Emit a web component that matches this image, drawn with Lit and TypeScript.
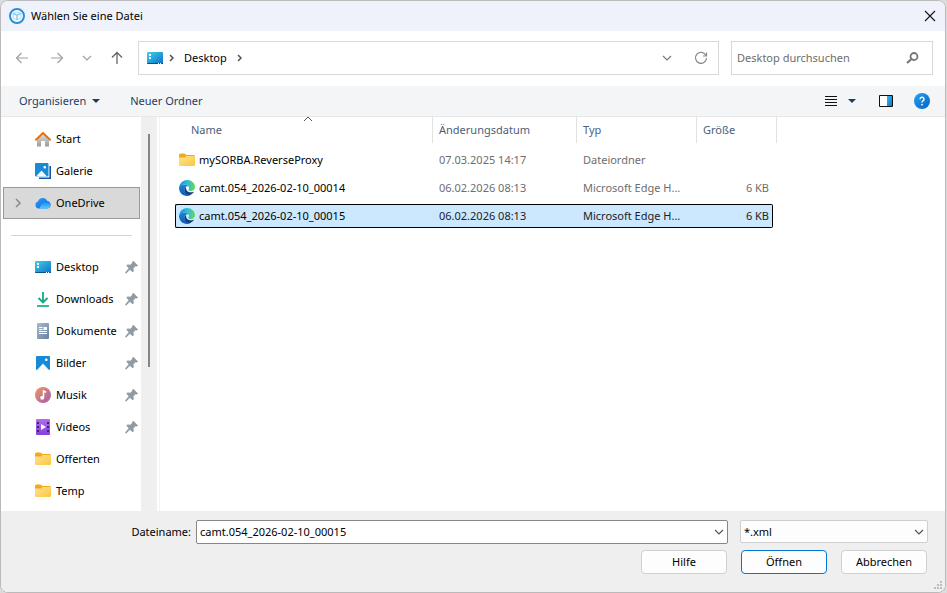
import { LitElement, html, css, svg, nothing } from "lit";
import { customElement, property, state } from "lit/decorators.js";
import { classMap } from "lit/directives/class-map.js";

const icons: Record<string, unknown> = {
  app: svg`<circle cx="8" cy="8" r="7" fill="#fff" stroke="#2b8ed6" stroke-width="2"/><path d="M4 5.300 8 4l4 1.300v4.700L8 12l-4-2z" fill="#f2faff" stroke="#a8d6f3"/><path d="M4 5.500 8 7l4-1.500M8 7v5" fill="none" stroke="#7cc0ea" stroke-width="1.200"/>`,
  close: svg`<path d="M3 3l10 10M13 3 3 13" fill="none" stroke="#1a1a1a" stroke-width="1.200"/>`,
  back: svg`<path d="M14 8H2.500M7.500 3l-5 5 5 5" fill="none" stroke="#a0a0a0" stroke-width="1.200"/>`,
  forward: svg`<path d="M2 8h11.500M8.500 3l5 5-5 5" fill="none" stroke="#a0a0a0" stroke-width="1.200"/>`,
  up: svg`<path d="M8 14V2.500M3 7.500l5-5 5 5" fill="none" stroke="#666" stroke-width="1.300"/>`,
  down: svg`<path d="M4 6l4 4 4-4" fill="none" stroke="currentColor" stroke-width="1.200"/>`,
  crumb: svg`<path d="M7 5l3 3-3 3" fill="none" stroke="#555" stroke-width="1.500"/>`,
  expand: svg`<path d="M6 4l4 4-4 4" fill="none" stroke="#8a8a8a" stroke-width="1.500"/>`,
  refresh: svg`<path d="M13 5.500A5.500 5.500 0 1 0 13.500 8M13.500 2.500v3.500H10" fill="none" stroke="#8a8a8a" stroke-width="1.200"/>`,
  search: svg`<circle cx="10" cy="6.500" r="3.500" fill="none" stroke="#777" stroke-width="1.800"/><path d="M7.500 9 3 13" stroke="#777" stroke-width="2.200"/>`,
  caret: svg`<path d="M4 6h8l-4 4z" fill="#1c3d64"/>`,
  lines: svg`<path d="M2 3.500h12M2 6.500h12M2 9.500h12M2 12.500h12" stroke="#111" stroke-width="1"/>`,
  pane: svg`<path d="M1.500 2.500h13v11h-13z" fill="#fff" stroke="#111"/><path d="M9 3h5v10H9z" fill="url(#g-pane)"/><defs><linearGradient id="g-pane" x2="1" y2="1"><stop stop-color="#35b4f2"/><stop offset="1" stop-color="#0b78d0"/></linearGradient></defs>`,
  help: svg`<defs><linearGradient id="g-help" x2="1" y2="1"><stop stop-color="#25a3ee"/><stop offset="1" stop-color="#0662c4"/></linearGradient></defs><circle cx="8" cy="8" r="8" fill="url(#g-help)"/><path d="M6 6.200a2 2 0 1 1 3 1.700c-.7.500-1 .8-1 1.700" fill="none" stroke="#fff" stroke-width="1.400"/><circle cx="8" cy="11.600" r=".9" fill="#fff"/>`,
  home: svg`<defs><linearGradient id="g-home" x2="0" y2="1"><stop stop-color="#e2e2e2"/><stop offset="1" stop-color="#9b9b9b"/></linearGradient></defs><path d="M2 7.500 8 2.500l6 5V15.500h-4V10H6v5.500H2z" fill="url(#g-home)"/><path d="M1 8.800 8 2l7 6.800" fill="none" stroke="#e8710f" stroke-width="2" stroke-linecap="round" stroke-linejoin="round"/>`,
  gallery: svg`<path d="M4 15.200h11.200V3" fill="none" stroke="#0c59a8" stroke-width="1.600"/><rect width="13.500" height="13.500" rx="1" fill="#188ad8"/><path d="M1 13.500 6.500 7.500 12 13.500z" fill="#f1faff"/><rect x="8.500" y="3" width="2.500" height="2.500" rx="1" fill="#fff"/>`,
  cloud: svg`<defs><linearGradient id="g-cloud" x2="1" y2="1"><stop stop-color="#2a9df8"/><stop offset="1" stop-color="#1264e0"/></linearGradient><linearGradient id="g-cloud2" x2="0" y2="1"><stop stop-color="#1d7cec"/><stop offset="1" stop-color="#4fd0ff"/></linearGradient></defs><path d="M3.500 13.500A3.600 3.600 0 0 1 3 6.500a5 5 0 0 1 9.300-.5 3.800 3.800 0 0 1 .2 7.500z" fill="url(#g-cloud)"/><path d="M4.500 13.500c1.500-4.500 4-7 8-7.200a3.700 3.700 0 0 1 0 7.200z" fill="url(#g-cloud2)"/>`,
  desktop: svg`<defs><linearGradient id="g-desk" x2="1" y2="1"><stop stop-color="#3bd3ea"/><stop offset="1" stop-color="#1070c8"/></linearGradient></defs><rect y="2" width="16" height="12" rx="1" fill="url(#g-desk)"/><path d="M0 13h16v.500l-.5.500H.5z" fill="#0e4f86"/><path d="M2 4h2v2H2zM2 7h2v2H2z" fill="#fff"/><path d="M11 13h1v1h-1zM13 13h1v1h-1z" fill="#fff"/>`,
  download: svg`<path d="M8 1v10M3.500 7 8 11.500 12.500 7" fill="none" stroke="#18a884" stroke-width="1.800"/><path d="M2 15h12" stroke="#20b488" stroke-width="1.800"/>`,
  document: svg`<defs><linearGradient id="g-doc" x2="1" y2="1"><stop stop-color="#a9bdd2"/><stop offset="1" stop-color="#66819f"/></linearGradient></defs><rect x="2" y="0" width="12" height="16" rx="1" fill="url(#g-doc)"/><path d="M4 4.500h3.500M4 6.500h3.500M4 8.500h8M4 10.500h8" stroke="#fff"/><path d="M8.500 4h3.500v3H8.500z" fill="#fff"/>`,
  picture: svg`<rect x="1" y="1" width="14" height="14" rx="1" fill="#168ad9"/><path d="M2 15 8 8.500l6 6.500z" fill="#f2faff"/><rect x="10" y="3.500" width="2.500" height="2.500" rx="1" fill="#fff"/>`,
  music: svg`<defs><linearGradient id="g-mus" x2="1" y2="1"><stop stop-color="#f09a5c"/><stop offset="1" stop-color="#a15bb0"/></linearGradient></defs><circle cx="8" cy="8" r="8" fill="url(#g-mus)"/><path d="M8.500 10.500V4l2.500 1.200" fill="none" stroke="#fff" stroke-width="1.500"/><circle cx="7.200" cy="10.700" r="2" fill="#fff"/>`,
  video: svg`<defs><linearGradient id="g-vid" x2="0" y2="1"><stop stop-color="#b06cf2"/><stop offset="1" stop-color="#8240dc"/></linearGradient></defs><rect x="1" width="14" height="16" rx="1" fill="url(#g-vid)"/><path d="M2 3h2v2H2zM2 7h2v2H2zM2 11h2v2H2zM12 3h2v2h-2zM12 7h2v2h-2zM12 11h2v2h-2z" fill="#46206f"/><path d="M6 5l5 3-5 3z" fill="#fff"/>`,
  folder: svg`<defs><linearGradient id="g-fold" x2="1" y2="1"><stop stop-color="#ffe391"/><stop offset="1" stop-color="#fcc63f"/></linearGradient></defs><path d="M0 3q0-1.500 1.500-1.500h4L7.500 3H14.500Q16 3 16 4.500V8H0z" fill="#efab18"/><path d="M0 5.500h6L7.500 4H15q1 0 1 1v8q0 1-1 1H1q-1 0-1-1z" fill="url(#g-fold)"/>`,
  edge: svg`<defs><linearGradient id="g-e1" x1="0" y1=".4" x2="1" y2=".5"><stop stop-color="#1a8fd8"/><stop offset=".5" stop-color="#2fbcd6"/><stop offset="1" stop-color="#62da52"/></linearGradient><linearGradient id="g-e2" x2="0" y2="1"><stop stop-color="#1a84d8"/><stop offset="1" stop-color="#0f5cb2"/></linearGradient></defs><path d="M.2 7C.9 3 4.200 0 8 0c4.800 0 8 3.600 8 7 0 2.600-1.900 4-4 4-1.800 0-2.700-.6-2.500-1.300.2-.6.6-.9.4-2.100C9.600 5.800 7.800 4.500 5.300 4.500 3 4.500 1.200 5.500.2 7z" fill="url(#g-e1)"/><path d="M0 8c.2-2.300 2.600-3.700 5.300-3.500 1.700.1 3.200.8 4 1.800C7.200 6 5.500 7.700 5.500 9.800c0 3 2.200 5 5.500 5.400-1 .5-2 .8-3 .8-4.400 0-8-3.600-8-8z" fill="url(#g-e2)"/><path d="M7 7c-1.100.8-1.600 1.800-1.600 3 0 3 2.500 5.200 5.500 5.300 1.600-.7 3-1.800 4-3.200.2-.3 0-.5-.3-.4-3.800 1.500-8-.2-7.600-4.700z" fill="#113f80"/>`,
  pin: svg`<path d="M10.500 2 15 6.500l-1.200 1L12.500 7.200l-2 2 .4 2.800-1.400 1.200-2.500-2.400L3.200 14.500l-1.200-.3.500-1.200 3.200-3.700L3.300 6.800l1.200-1.300 2.800.3 2-2-.2-1z" fill="#8f9ba5"/>`,
  sort: svg`<path d="M4 10l4-4 4 4" fill="none" stroke="#555"/>`,
  grip: svg`<path d="M11 5h2v2h-2zM8 8h2v2H8zM11 8h2v2h-2zM5 11h2v2H5zM8 11h2v2H8zM11 11h2v2h-2z" fill="#bcbcbc"/>`,
};

const icon = (name: string) =>
  html`<svg class="icon" width="16" height="16" viewBox="0 0 16 16" aria-hidden="true">${icons[name]}</svg>`;

const base = css`
  * {
    box-sizing: border-box;
  }
  .icon {
    display: block;
    flex: none;
  }
  button,
  input,
  select {
    font: inherit;
    color: inherit;
    margin: 0;
    padding: 0;
    border: 0;
    background: none;
    outline: 0;
  }
  button {
    display: flex;
    align-items: center;
    justify-content: center;
  }
`;

interface Place {
  label: string;
  icon: string;
  pinned?: boolean;
}

interface FileRow {
  name: string;
  icon: string;
  date: string;
  type: string;
  size: string;
}

@customElement("nav-pane")
class NavPane extends LitElement {
  static styles = [
    base,
    css`
      :host {
        display: flex;
        flex: none;
        width: 156px;
        background: #efefef;
      }
      .list {
        flex: 1;
        padding: 6px 1px 0 2px;
        background: #fff;
        overflow: hidden;
      }
      .item {
        display: flex;
        align-items: center;
        height: 32px;
        padding-left: 6px;
        border: 1px solid transparent;
        color: #000;
        text-decoration: none;
      }
      .current {
        background: #d9d9d9;
        border-color: #999;
      }
      .arrow {
        width: 25px;
      }
      .label {
        flex: 1;
        padding-left: 5px;
        white-space: nowrap;
      }
      .rule {
        height: 1px;
        margin: 16px 8px 15px;
        border: 0;
        background: #d4d4d4;
      }
      .track {
        width: 16px;
        padding: 17px 7px 0;
      }
      .thumb {
        height: 233px;
        background: #858585;
      }
    `,
  ];

  @state() private top: Place[] = [
    { label: "Start", icon: "home" },
    { label: "Galerie", icon: "gallery" },
    { label: "OneDrive", icon: "cloud" },
  ];

  @state() private places: Place[] = [
    { label: "Desktop", icon: "desktop", pinned: true },
    { label: "Downloads", icon: "download", pinned: true },
    { label: "Dokumente", icon: "document", pinned: true },
    { label: "Bilder", icon: "picture", pinned: true },
    { label: "Musik", icon: "music", pinned: true },
    { label: "Videos", icon: "video", pinned: true },
    { label: "Offerten", icon: "folder" },
    { label: "Temp", icon: "folder" },
  ];

  private item(p: Place) {
    const current = p.label === "OneDrive";
    return html`<a class=${classMap({ item: true, current })} href="#${p.label}">
      <span class="arrow">${current ? icon("expand") : nothing}</span>
      ${icon(p.icon)}
      <span class="label">${p.label}</span>
      ${p.pinned ? icon("pin") : nothing}
    </a>`;
  }

  render() {
    return html`
      <nav class="list">
        ${this.top.map((p) => this.item(p))}
        <hr class="rule" />
        ${this.places.map((p) => this.item(p))}
      </nav>
      <div class="track"><div class="thumb"></div></div>
    `;
  }
}

@customElement("file-list")
class FileList extends LitElement {
  static styles = [
    base,
    css`
      :host {
        display: block;
        flex: 1;
        min-width: 0;
        margin-left: 2px;
        padding-left: 15px;
        border-left: 1px solid #f3f3f3;
        overflow: hidden;
      }
      .files {
        width: 602px;
        table-layout: fixed;
        border-collapse: collapse;
        color: #6d6d6d;
      }
      .c-name {
        width: 258px;
      }
      .c-date {
        width: 144px;
      }
      .c-type {
        width: 120px;
      }
      .c-size {
        width: 80px;
      }
      th,
      td {
        padding: 0;
        text-align: left;
        font-weight: 400;
      }
      .head {
        display: flex;
        align-items: center;
        position: relative;
        height: 26px;
        margin-bottom: 3px;
        padding-left: 6px;
        border-right: 1px solid #e2e2e2;
        color: #4c607a;
      }
      .head.first {
        padding-left: 16px;
      }
      .sort {
        position: absolute;
        top: -6px;
        left: 125px;
      }
      .cell {
        display: flex;
        align-items: center;
        height: 24px;
        margin: 2px 0;
        padding-left: 6px;
        border: 0 solid transparent;
        border-width: 1px 0;
        white-space: nowrap;
      }
      .text {
        overflow: hidden;
        text-overflow: ellipsis;
      }
      .name {
        gap: 4px;
        padding-left: 3px;
        border-left-width: 1px;
        color: #000;
      }
      .type {
        padding-right: 10px;
      }
      .size {
        justify-content: flex-end;
        margin-right: 4px;
        padding-right: 3px;
        border-right-width: 1px;
      }
      .selected .cell {
        background: #cce8ff;
        border-color: #000;
        color: #222;
      }
      .selected .name {
        border-radius: 2px 0 0 2px;
        color: #000;
      }
      .selected .size {
        border-radius: 0 2px 2px 0;
      }
    `,
  ];

  @property({ attribute: false }) selected = "";

  @state() private rows: FileRow[] = [
    { name: "mySORBA.ReverseProxy", icon: "folder", date: "07.03.2025 14:17", type: "Dateiordner", size: "" },
    { name: "camt.054_2026-02-10_00014", icon: "edge", date: "06.02.2026 08:13", type: "Microsoft Edge H...", size: "6 KB" },
    { name: "camt.054_2026-02-10_00015", icon: "edge", date: "06.02.2026 08:13", type: "Microsoft Edge H...", size: "6 KB" },
  ];

  render() {
    return html`<table class="files">
      <colgroup>
        <col class="c-name" /><col class="c-date" /><col class="c-type" /><col class="c-size" />
      </colgroup>
      <thead>
        <tr>
          <th scope="col"><div class="head first">Name<span class="sort">${icon("sort")}</span></div></th>
          <th scope="col"><div class="head">Änderungsdatum</div></th>
          <th scope="col"><div class="head">Typ</div></th>
          <th scope="col"><div class="head">Größe</div></th>
        </tr>
      </thead>
      <tbody>
        ${this.rows.map(
          (r) => html`<tr class=${classMap({ selected: r.name === this.selected })}>
            <td><div class="cell name">${icon(r.icon)}<span class="text">${r.name}</span></div></td>
            <td><div class="cell"><span class="text">${r.date}</span></div></td>
            <td><div class="cell type"><span class="text">${r.type}</span></div></td>
            <td><div class="cell size"><span class="text">${r.size}</span></div></td>
          </tr>`,
        )}
      </tbody>
    </table>`;
  }
}

@customElement("app-root")
class AppRoot extends LitElement {
  static styles = [
    base,
    css`
      :host {
        display: flex;
        height: 100vh;
        padding-right: 1px;
        background: #dcdcdc;
        font: 11px/16px "Noto Sans", "Open Sans", sans-serif;
        color: #000;
      }
      .dialog {
        flex: 1;
        min-width: 0;
        display: flex;
        flex-direction: column;
        border: 1px solid #bababa;
        border-radius: 8px;
        background: #fff;
        overflow: hidden;
      }
      .title {
        display: flex;
        align-items: center;
        gap: 6px;
        height: 30px;
        padding: 0 7px 0 8px;
        background: #eff2fa;
      }
      .title-text {
        flex: 1;
        margin: 0;
        font: inherit;
      }
      .address {
        display: flex;
        align-items: center;
        height: 55px;
        padding: 0 12px 2px;
      }
      .history {
        display: flex;
        width: 125px;
        padding-left: 1px;
        color: #a0a0a0;
      }
      .back {
        margin-right: 19px;
      }
      .forward {
        margin-right: 14px;
      }
      .recent {
        margin-right: 14px;
      }
      .path {
        flex: 1;
        display: flex;
        align-items: center;
        height: 34px;
        padding: 0 9px 0 8px;
        border: 1px solid #d9d9d9;
        color: #777;
      }
      .crumb {
        margin: 0 4px 0 5px;
        color: #000;
      }
      .spacer {
        flex: 1;
      }
      .reload {
        margin-left: 18px;
      }
      .search {
        display: flex;
        align-items: center;
        width: 202px;
        height: 34px;
        margin-left: 12px;
        padding: 0 12px 0 5px;
        border: 1px solid #d9d9d9;
      }
      .search-input {
        flex: 1;
        min-width: 0;
      }
      .search-input::placeholder {
        color: #6d6d6d;
        opacity: 1;
      }
      .toolbar {
        display: flex;
        align-items: center;
        height: 31px;
        padding: 0 15px 0 18px;
        border-bottom: 1px solid #e6e7e9;
        background: #f4f5f7;
        color: #1c3d64;
      }
      .new {
        margin-left: 26px;
      }
      .more {
        margin-left: 5px;
      }
      .preview {
        margin-left: 18px;
      }
      .help {
        margin-left: 20px;
      }
      .organize {
        gap: 2px;
      }
      .body {
        flex: 1;
        display: flex;
        min-height: 0;
      }
      .footer {
        display: grid;
        grid-template-columns: 190px 1fr 188px;
        align-content: start;
        row-gap: 6px;
        position: relative;
        height: 81px;
        padding: 9px 17px 0 0;
        background: #efefef;
      }
      .file-label {
        line-height: 24px;
        text-align: right;
      }
      .combo {
        display: flex;
        align-items: center;
        height: 24px;
        margin: 0 12px 0 5px;
        border: 1px solid #868686;
        border-radius: 2px;
        background: #fff;
        color: #555;
      }
      .file-input {
        flex: 1;
        min-width: 0;
        padding-left: 3px;
        color: #000;
      }
      .filter {
        display: grid;
        align-items: center;
        height: 23px;
        border: 1px solid #cfcfcf;
        border-radius: 2px;
        background: #fdfdfd;
        color: #555;
      }
      .filter-select {
        grid-area: 1 / 1;
        height: 21px;
        padding-left: 3px;
        appearance: none;
        color: #000;
      }
      .filter .icon {
        grid-area: 1 / 1;
        justify-self: end;
        pointer-events: none;
      }
      .actions {
        grid-column: 1 / -1;
        display: flex;
        justify-content: flex-end;
        gap: 14px;
        padding-right: 1px;
      }
      .action {
        width: 86px;
        height: 24px;
        border: 1px solid #d0d0d0;
        border-radius: 4px;
        background: #fdfdfd;
      }
      .primary {
        border-color: #0078d4;
      }
      .grip {
        position: absolute;
        right: 0;
        bottom: 0;
      }
    `,
  ];

  @state() private file = "camt.054_2026-02-10_00015";

  render() {
    return html`<main class="dialog">
      <header class="title">
        ${icon("app")}
        <h1 class="title-text">Wählen Sie eine Datei</h1>
        <button aria-label="Schließen">${icon("close")}</button>
      </header>
      <div class="address">
        <div class="history">
          <button class="back" aria-label="Zurück">${icon("back")}</button>
          <button class="forward" aria-label="Vorwärts">${icon("forward")}</button>
          <button class="recent" aria-label="Zuletzt besucht">${icon("down")}</button>
          <button aria-label="Nach oben">${icon("up")}</button>
        </div>
        <div class="path">
          ${icon("desktop")}${icon("crumb")}
          <button class="crumb">Desktop</button>
          ${icon("crumb")}
          <span class="spacer"></span>
          <button aria-label="Vorherige Orte">${icon("down")}</button>
          <button class="reload" aria-label="Aktualisieren">${icon("refresh")}</button>
        </div>
        <div class="search">
          <input class="search-input" type="text" aria-label="Desktop durchsuchen" placeholder="Desktop durchsuchen" />
          ${icon("search")}
        </div>
      </div>
      <div class="toolbar">
        <button class="organize">Organisieren ${icon("caret")}</button>
        <button class="new">Neuer Ordner</button>
        <span class="spacer"></span>
        <button aria-label="Ansicht">${icon("lines")}</button>
        <button class="more" aria-label="Weitere Optionen">${icon("caret")}</button>
        <button class="preview" aria-label="Vorschaufenster">${icon("pane")}</button>
        <button class="help" aria-label="Hilfe">${icon("help")}</button>
      </div>
      <div class="body">
        <nav-pane></nav-pane>
        <file-list .selected=${this.file}></file-list>
      </div>
      <footer class="footer">
        <label class="file-label" for="file">Dateiname:</label>
        <div class="combo">
          <input class="file-input" id="file" type="text" .value=${this.file} />
          <button aria-label="Verlauf">${icon("down")}</button>
        </div>
        <div class="filter">
          <select class="filter-select" aria-label="Dateityp">
            <option>*.xml</option>
          </select>
          ${icon("down")}
        </div>
        <div class="actions">
          <button class="action">Hilfe</button>
          <button class="action primary">Öffnen</button>
          <button class="action">Abbrechen</button>
        </div>
        <span class="grip">${icon("grip")}</span>
      </footer>
    </main>`;
  }
}
